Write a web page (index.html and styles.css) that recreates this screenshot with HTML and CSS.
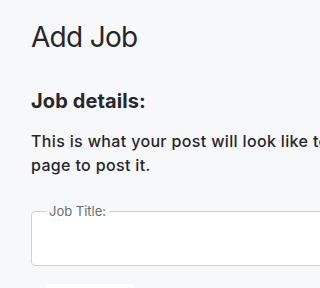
FILE: index.html
```html
<!DOCTYPE html>
<html lang="en">
<head>
<meta charset="utf-8">
<title>Add Job</title>
<link rel="stylesheet" href="styles.css">
</head>
<body>
<main class="page">
  <h1 class="page-title">Add Job</h1>
  <section class="details">
    <h2 class="section-title">Job details:</h2>
    <p class="intro">This is what your post will look like to candidates. Continue to the next<br>page to post it.</p>
    <fieldset class="field">
      <legend class="field-label">Job Title:</legend>
      <input class="field-input" type="text" aria-label="Job Title">
    </fieldset>
    <div class="tabs">
      <div class="tab"></div>
    </div>
  </section>
</main>
</body>
</html>
```
FILE: styles.css
```css
html, body {
  margin: 0;
  padding: 0;
  background: #f7f8fa;
  overflow: hidden;
  width: 100%;
  height: 100%;
}
body {
  font-family: Inter, "Noto Sans", sans-serif;
  color: #26262b;
}
.page {
  box-sizing: border-box;
  width: 100%;
  height: 100%;
  overflow: hidden;
  padding: 20px 0 0 31px;
}
.page-title {
  margin: 0;
  font-size: 28px;
  line-height: 34px;
  font-weight: 400;
  letter-spacing: -0.7px;
}
.details {
  display: flex;
  flex-direction: column;
  align-items: flex-start;
}
.section-title {
  margin: 35px 0 0;
  font-size: 20px;
  line-height: 24px;
  font-weight: 700;
  letter-spacing: 0.1px;
}
.intro {
  margin: 16px 0 0;
  font-size: 16px;
  line-height: 24px;
  font-weight: 500;
  letter-spacing: 0.35px;
  white-space: nowrap;
}
.field {
  box-sizing: border-box;
  flex: none;
  margin: 26px 0 0;
  width: 640px;
  height: 63px;
  padding: 0 14px;
  border: 1px solid #cfcfd2;
  border-radius: 4px;
  background: #fff;
}
.field-label {
  padding: 0 3px;
  font-size: 13px;
  line-height: 16px;
  color: #6b6b70;
}
.field-input {
  border: 0;
  outline: 0;
  background: transparent;
  width: 100%;
  height: 36px;
  font: inherit;
}
.tabs {
  margin: 18px 0 0 15px;
}
.tab {
  width: 88px;
  height: 30px;
  background: #fff;
  border-radius: 4px;
}
```
